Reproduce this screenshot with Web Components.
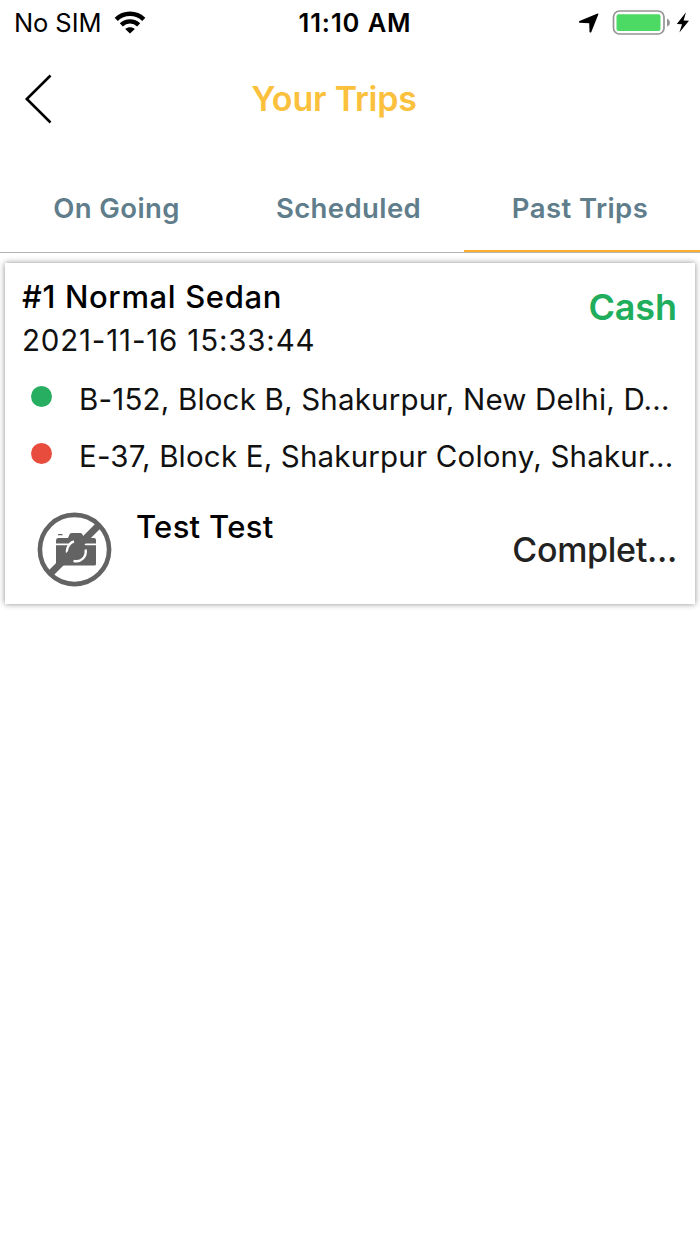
<!DOCTYPE html>
<html lang="en">
<head>
<meta charset="utf-8">
<meta name="viewport" content="width=device-width, initial-scale=1">
<title>Your Trips</title>
<style>
  body {
    margin: 0;
    background: #fff;
    color: #111;
    font-family: Inter, "Liberation Sans", sans-serif;
  }
</style>
</head>
<body>
<trips-screen></trips-screen>

<script>
/**
 * Base class: renders the subclass template into an open shadow root.
 */
class BaseElement extends HTMLElement {
  constructor() {
    super();
    this.attachShadow({ mode: 'open' });
  }

  connectedCallback() {
    this.shadowRoot.innerHTML = this.template();
  }
}

/**
 * <status-bar carrier="No SIM" time="11:10 AM"></status-bar>
 */
class StatusBar extends BaseElement {
  template() {
    return `
      <style>
        :host {
          display: grid;
          grid-template-columns: 1fr auto 1fr;
          align-items: center;
          height: 46px;
          padding: 0 10px 0 14px;
          color: #000;
          font-size: 25.5px;
          line-height: 46px;
          white-space: nowrap;
        }
        .left, .right { display: flex; align-items: center; }
        .carrier { letter-spacing: -0.1px; }
        .wifi { margin: 0 0 1px 13px; }
        .time { font-weight: 600; letter-spacing: 0.9px; margin-left: 6px; }
        .right { justify-content: flex-end; }
        svg { display: block; }
      </style>
      <div class="left">
        <span class="carrier">${this.getAttribute('carrier')}</span>
        <svg class="wifi" width="32" height="23" viewBox="0 0 32 23">
          <g fill="none" stroke="#000" stroke-width="4.4">
            <path d="M2.2 8.4C9.8 .8 22.2 .8 29.8 8.4"/>
            <path d="M7.3 13.9C12.2 9.2 19.8 9.2 24.7 13.9"/>
          </g>
          <path d="M16 22.6L11.2 17.9C14 15.6 18 15.6 20.8 17.9Z"/>
        </svg>
      </div>
      <span class="time">${this.getAttribute('time')}</span>
      <div class="right">
        <svg width="112" height="30" viewBox="578 8 112 30">
          <path d="M597.6 13.6Q598.6 13.4 598.3 14.5L591.3 32Q590.5 33.2 589.5 32L589.2 23.3L579.5 22.8Q578 22 579.5 20.9Z"/>
          <rect x="613.5" y="11" width="50.5" height="23" rx="6" fill="none" stroke="#949494" stroke-width="1.7"/>
          <rect x="616.5" y="14.2" width="44" height="16.8" rx="2" fill="#4cd964"/>
          <path d="M667 18.6Q670 20 670 22.7Q670 25.4 667 26.8Z" fill="#949494"/>
          <path d="M686 12.3L676.8 24L682 24.2L679.4 32.6L689 20.8L683.6 20.6Z"/>
        </svg>
      </div>
    `;
  }
}

/**
 * <page-header>Title</page-header>
 */
class PageHeader extends BaseElement {
  template() {
    return `
      <style>
        :host {
          display: grid;
          grid-template-columns: 60px 1fr 60px;
          align-items: center;
          height: 105px;
          padding: 0 32px 0 0;
        }
        .back {
          padding: 0 0 0 24px;
          border: 0;
          background: none;
        }
        .back svg { display: block; }
        h1 {
          margin: 0;
          color: #fbc13c;
          font-size: 34px;
          font-weight: 600;
          letter-spacing: -0.2px;
          text-align: center;
        }
      </style>
      <button class="back" aria-label="Back">
        <svg width="30" height="50" viewBox="0 0 30 50">
          <path d="M26.5 1.5L2.8 25L26.5 48.5" fill="none" stroke="#000" stroke-width="2.6"/>
        </svg>
      </button>
      <h1><slot></slot></h1>
    `;
  }
}

/**
 * <tab-item active>Label</tab-item>
 */
class TabItem extends BaseElement {
  template() {
    return `
      <style>
        :host {
          display: block;
          box-sizing: border-box;
          height: 88px;
          color: #607d8b;
          font-size: 27.5px;
          font-weight: 600;
          line-height: 88px;
          letter-spacing: 0.4px;
          text-align: center;
          white-space: nowrap;
          padding-left: 1px;
        }
        :host([active]) {
          padding-right: 5px;
          box-shadow: inset 0 -2px #fcb02e;
        }
      </style>
      <slot></slot>
    `;
  }
}

class TabBar extends BaseElement {
  template() {
    return `
      <style>
        :host {
          display: grid;
          grid-template-columns: 232px 232px 1fr;
          margin-top: 13px;
          border-bottom: 1px solid #b5b5b5;
        }
      </style>
      <slot></slot>
    `;
  }
}

/**
 * <route-stop color="#27ae60">Address</route-stop>
 */
class RouteStop extends BaseElement {
  template() {
    return `
      <style>
        :host {
          display: flex;
          align-items: center;
          height: 57px;
          font-size: 29.5px;
          line-height: 57px;
        }
        .dot {
          flex: none;
          width: 21px;
          height: 21px;
          margin: 0 27px 7px 8px;
          border-radius: 50%;
          background: ${this.getAttribute('color')};
        }
        .address {
          letter-spacing: 0.19px;
          white-space: nowrap;
        }
      </style>
      <span class="dot"></span>
      <span class="address"><slot></slot></span>
    `;
  }
}

/**
 * Placeholder for a driver without a photo: crossed-out camera.
 */
class NoPhoto extends BaseElement {
  template() {
    return `
      <style>
        :host { display: block; width: 75px; height: 75px; }
        svg { display: block; }
      </style>
      <svg width="75" height="75" viewBox="0 0 75 75">
        <g fill="#636363">
          <path d="M21 22h4.500v1.200h-4.500zM19 31.500v-3q0-2.500 2-2.500h10l1.500-3.500q.5-1.500 2-1.500h9q1.500 0 2 1.500l1.500 3.500h10q2 0 2 2v3.500z"/>
          <path d="M19 33.200h40v18.800q0 1.500-1.500 1.500H20.500q-1.500 0-1.500-1.500z"/>
        </g>
        <circle cx="39.500" cy="38.800" r="10.500" fill="#636363"/>
        <path d="M30.200 42Q29 36 33 31.800Q34.500 30.300 37 29.500M36.500 48.800Q42 50.500 46 46.500Q49.500 43 48.600 37.500" fill="none" stroke="#fff" stroke-width="2.400"/>
        <path d="M13.500 61.500L61.500 13.500" stroke="#636363" stroke-width="6.800"/>
        <circle cx="37.500" cy="37.500" r="34.600" fill="none" stroke="#636363" stroke-width="4.600"/>
      </svg>
    `;
  }
}

/**
 * <trip-card name="" date="" payment="" driver="" status="">stops</trip-card>
 */
class TripCard extends BaseElement {
  template() {
    return `
      <style>
        :host {
          display: block;
          box-sizing: border-box;
          height: 341px;
          margin: 10px 5px 0;
          padding: 11px 18px 0;
          background: #fff;
          box-shadow: 0 0 6px rgba(0, 0, 0, 0.45);
          white-space: nowrap;
        }
        .summary { display: flex; justify-content: space-between; }
        .name {
          margin-left: -1px;
          color: #000;
          font-size: 31px;
          font-weight: 500;
          line-height: 45px;
          letter-spacing: 0.65px;
        }
        .date {
          margin-left: -1px;
          font-size: 29.5px;
          line-height: 43px;
          letter-spacing: 0.82px;
        }
        .payment {
          color: #20ad5c;
          font-size: 36px;
          font-weight: 600;
          line-height: 66px;
          letter-spacing: -0.1px;
        }
        .stops { padding-top: 9px; }
        .footer { display: flex; padding: 27px 0 0 14px; }
        .driver {
          flex: 1;
          padding-left: 24px;
          color: #000;
          font-size: 31px;
          font-weight: 500;
          line-height: 29px;
          letter-spacing: 0.3px;
        }
        .status {
          color: #222;
          font-size: 34px;
          font-weight: 500;
          line-height: 75px;
          letter-spacing: -0.3px;
        }
      </style>
      <div class="summary">
        <div>
          <div class="name">${this.getAttribute('name')}</div>
          <div class="date">${this.getAttribute('date')}</div>
        </div>
        <div class="payment">${this.getAttribute('payment')}</div>
      </div>
      <div class="stops"><slot></slot></div>
      <div class="footer">
        <no-photo></no-photo>
        <div class="driver">${this.getAttribute('driver')}</div>
        <div class="status">${this.getAttribute('status')}</div>
      </div>
    `;
  }
}

class TripsScreen extends BaseElement {
  template() {
    return `
      <style>
        :host { display: block; width: 700px; height: 1244px; overflow: hidden; }
      </style>
      <status-bar carrier="No SIM" time="11:10 AM"></status-bar>
      <page-header>Your Trips</page-header>
      <tab-bar>
        <tab-item>On Going</tab-item>
        <tab-item>Scheduled</tab-item>
        <tab-item active>Past Trips</tab-item>
      </tab-bar>
      <trip-card name="#1 Normal Sedan" date="2021-11-16 15:33:44" payment="Cash"
        driver="Test Test" status="Complet...">
        <route-stop color="#27ae60">B-152, Block B, Shakurpur, New Delhi, D...</route-stop>
        <route-stop color="#e74c3c">E-37, Block E, Shakurpur Colony, Shakur...</route-stop>
      </trip-card>
    `;
  }
}

customElements.define('status-bar', StatusBar);
customElements.define('page-header', PageHeader);
customElements.define('tab-item', TabItem);
customElements.define('tab-bar', TabBar);
customElements.define('route-stop', RouteStop);
customElements.define('no-photo', NoPhoto);
customElements.define('trip-card', TripCard);
customElements.define('trips-screen', TripsScreen);
</script>
</body>
</html>
